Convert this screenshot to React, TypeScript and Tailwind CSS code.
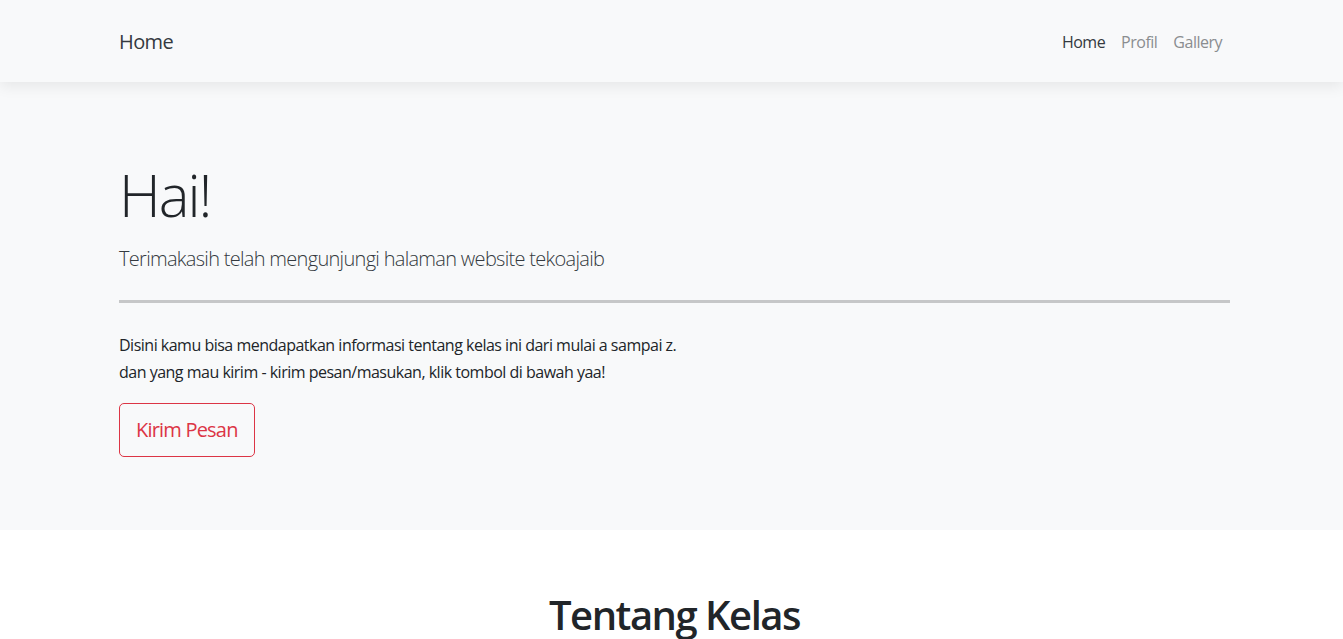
export default function App() {
  const links = [
    { label: 'Home', active: true },
    { label: 'Profil', active: false },
    { label: 'Gallery', active: false },
  ];

  return (
    <div className="min-h-screen bg-white text-[#212529] font-['Open_Sans',sans-serif]">
      {/* Navbar */}
      <nav className="relative z-10 h-[82px] bg-[#f8f9fa] shadow-[0_4px_14px_rgba(0,0,0,0.08)]">
        <div className="ml-[119px] w-[1111px] h-full flex items-center justify-between pt-[2px]">
          <a className="text-[20px] tracking-[-0.6px] text-[#343a40]">Home</a>
          <ul className="flex">
            {links.map((l) => (
              <li key={l.label}>
                <a
                  className={`block px-2 text-[16px] tracking-[-0.5px] ${
                    l.active ? 'text-[#343a40]' : 'text-[#8a8d90]'
                  }`}
                >
                  {l.label}
                </a>
              </li>
            ))}
          </ul>
        </div>
      </nav>

      {/* Jumbotron */}
      <section className="h-[448px] bg-[#f8f9fa]">
        <div className="ml-[119px] w-[1111px] pt-[78px]">
          <h1 className="text-[58px] font-light leading-[1.2] tracking-[-2px] text-[#212529]">Hai!</h1>
          <p className="mt-[14px] text-[20px] font-light tracking-[-0.7px] text-[#343a40]">
            Terimakasih telah mengunjungi halaman website tekoajaib
          </p>
          <hr className="mt-[26px] border-t-[3px] border-[#c6c7c8]" />
          <p className="mt-[29px] text-[16px] leading-[27px] tracking-[-0.5px]">
            Disini kamu bisa mendapatkan informasi tentang kelas ini dari mulai a sampai z.
            <br />
            dan yang mau kirim - kirim pesan/masukan, klik tombol di bawah yaa!
          </p>
          <button className="mt-[17px] h-[54px] px-4 rounded-[5px] border border-[#dc3545] text-[20px] tracking-[-0.8px] text-[#dc3545]">
            Kirim Pesan
          </button>
        </div>
      </section>

      {/* Tentang Kelas */}
      <section className="pt-[61px]">
        <h2 className="ml-[119px] w-[1111px] text-center text-[40px] font-semibold tracking-[-1.5px] text-[#212529] leading-[1.2]">
          Tentang Kelas
        </h2>
      </section>
    </div>
  );
}
